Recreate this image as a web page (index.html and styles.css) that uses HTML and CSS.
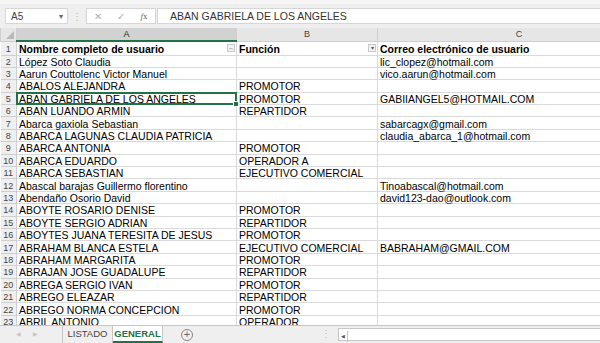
FILE: index.html
```html
<!DOCTYPE html>
<html lang="es">
<head>
<meta charset="UTF-8">
<title>GENERAL - Excel</title>
<link rel="stylesheet" href="styles.css">
</head>
<body>
<div class="formula-bar">
  <div class="name-box">A5<span class="caret">&#9662;</span></div>
  <div class="grip">&#8942;</div>
  <div class="fx-box">
    <span class="fx-btn">&#10005;</span>
    <span class="fx-btn">&#10003;</span>
    <span class="fx-btn fx"><i>f</i>x</span>
  </div>
  <div class="formula">ABAN GABRIELA DE LOS ANGELES</div>
</div>

<div class="grid-wrap">
<table class="sheet">
  <colgroup>
    <col class="c-head"><col class="c-a"><col class="c-b"><col class="c-c">
  </colgroup>
  <thead>
    <tr class="col-heads">
      <th class="corner"><span class="tri"></span></th>
      <th class="sel">A</th>
      <th>B</th>
      <th>C</th>
    </tr>
  </thead>
  <tbody>
    <tr class="r1"><th>1</th><td class="hd">Nombre completo de usuario<span class="filter sort">&#8596;</span></td><td class="hd">Función<span class="filter">&#9662;</span></td><td class="hd">Correo electrónico de usuario</td></tr>
    <tr><th>2</th><td>López Soto Claudia</td><td></td><td>lic_clopez@hotmail.com</td></tr>
    <tr><th>3</th><td>Aarun Couttolenc Victor Manuel</td><td></td><td>vico.aarun@hotmail.com</td></tr>
    <tr><th>4</th><td>ABALOS ALEJANDRA</td><td>PROMOTOR</td><td></td></tr>
    <tr class="cur"><th>5</th><td class="active">ABAN GABRIELA DE LOS ANGELES</td><td>PROMOTOR</td><td>GABIIANGEL5@HOTMAIL.COM</td></tr>
    <tr><th>6</th><td>ABAN LUANDO ARMIN</td><td>REPARTIDOR</td><td></td></tr>
    <tr><th>7</th><td>Abarca gaxiola Sebastian</td><td></td><td>sabarcagx@gmail.com</td></tr>
    <tr><th>8</th><td>ABARCA LAGUNAS CLAUDIA PATRICIA</td><td></td><td>claudia_abarca_1@hotmail.com</td></tr>
    <tr><th>9</th><td>ABARCA ANTONIA</td><td>PROMOTOR</td><td></td></tr>
    <tr><th>10</th><td>ABARCA EDUARDO</td><td>OPERADOR A</td><td></td></tr>
    <tr><th>11</th><td>ABARCA SEBASTIAN</td><td>EJECUTIVO COMERCIAL</td><td></td></tr>
    <tr><th>12</th><td>Abascal barajas Guillermo florentino</td><td></td><td>Tinoabascal@hotmail.com</td></tr>
    <tr><th>13</th><td>Abendaño Osorio David</td><td></td><td>david123-dao@outlook.com</td></tr>
    <tr><th>14</th><td>ABOYTE ROSARIO DENISE</td><td>PROMOTOR</td><td></td></tr>
    <tr><th>15</th><td>ABOYTE SERGIO ADRIAN</td><td>REPARTIDOR</td><td></td></tr>
    <tr><th>16</th><td>ABOYTES JUANA TERESITA DE JESUS</td><td>PROMOTOR</td><td></td></tr>
    <tr><th>17</th><td>ABRAHAM BLANCA ESTELA</td><td>EJECUTIVO COMERCIAL</td><td>BABRAHAM@GMAIL.COM</td></tr>
    <tr><th>18</th><td>ABRAHAM MARGARITA</td><td>PROMOTOR</td><td></td></tr>
    <tr><th>19</th><td>ABRAJAN JOSE GUADALUPE</td><td>REPARTIDOR</td><td></td></tr>
    <tr><th>20</th><td>ABREGA SERGIO IVAN</td><td>PROMOTOR</td><td></td></tr>
    <tr><th>21</th><td>ABREGO ELEAZAR</td><td>REPARTIDOR</td><td></td></tr>
    <tr><th>22</th><td>ABREGO NORMA CONCEPCION</td><td>PROMOTOR</td><td></td></tr>
    <tr><th>23</th><td>ABRIL ANTONIO</td><td>OPERADOR</td><td></td></tr>
    <tr><th>24</th><td></td><td></td><td></td></tr>
  </tbody>
</table>
</div>

<div class="tab-bar">
  <span class="nav">&#9664;</span>
  <span class="nav next">&#9654;</span>
  <div class="tabs">
    <span class="tab">LISTADO</span>
    <span class="tab on">GENERAL</span>
  </div>
  <span class="add">+</span>
  <span class="tab-grip">&#8942;</span>
  <div class="hscroll"><span class="hs-arrow">&#9664;</span></div>
</div>
</body>
</html>
```

FILE: styles.css
```css
body {
margin: 0;
width: 600px;
height: 343px;
overflow: hidden;
background: #fff;
font-family: "Liberation Sans", Arial, sans-serif;
color: #000;
display: flex;
flex-direction: column;
}
.formula-bar {
height: 28px;
flex: none;
background: #efefef;
border-top: 4px solid #f6f6f6;
box-sizing: border-box;
display: flex;
align-items: center;
padding: 0 0 0 5px;
font-size: 10px;
}
.name-box {
width: 63px;
height: 16px;
box-sizing: border-box;
background: #fff;
border: 1px solid #d6d6d6;
display: flex;
align-items: center;
justify-content: space-between;
padding: 0 4px 0 5px;
color: #444;
}
.caret {
font-size: 8px;
color: #666;
}
.grip {
width: 18px;
text-align: center;
color: #b5b5b5;
font-size: 10px;
}
.fx-box {
width: 70px;
height: 16px;
box-sizing: border-box;
background: #fff;
border: 1px solid #d6d6d6;
display: flex;
align-items: center;
justify-content: space-around;
color: #b0b0b0;
font-size: 10px;
margin-right: 1px;
}
.fx {
color: #666;
font-family: "Liberation Serif", serif;
font-size: 9px;
}
.formula {
flex: 1;
height: 16px;
box-sizing: border-box;
background: #fff;
border: 1px solid #d6d6d6;
border-right: none;
padding-left: 12px;
line-height: 14px;
font-size: 10.5px;
color: #333;
}
.grid-wrap {
flex: 1;
overflow: hidden;
}
.sheet {
border-collapse: collapse;
table-layout: fixed;
width: 660px;
font-size: 10.5px;
}
.c-head { width: 16px; }
.c-a { width: 220px; }
.c-b { width: 141px; }
.c-c { width: 283px; }
.sheet tbody tr {
height: 12.4px;
}
.sheet td {
padding: 1px 0 0 2px;
line-height: 10px;
border: 1px solid #dadada;
white-space: nowrap;
overflow: visible;
}
.sheet tbody th {
font-weight: normal;
font-size: 9px;
line-height: 10px;
color: #444;
background: #efefef;
border: 1px solid #cfcfcf;
border-left: none;
text-align: center;
padding: 1px 0 0;
}
.col-heads th {
height: 12px;
background: #e6e6e6;
border: 1px solid #cfcfcf;
border-top: none;
font-weight: normal;
font-size: 9px;
color: #444;
padding: 0;
}
.col-heads th.sel {
background: #d2d2d2;
border-bottom: 2px solid #217346;
color: #262626;
}
.corner {
position: relative;
}
.tri {
position: absolute;
right: 2px;
bottom: 2px;
border-left: 8px solid transparent;
border-bottom: 8px solid #b9b9b9;
}
.sheet tbody tr.r1 {
height: 14px;
}
.hd {
font-weight: bold;
position: relative;
}
.filter {
position: absolute;
right: 1px;
top: 2px;
width: 8px;
height: 8px;
box-sizing: border-box;
border: 1px solid #c8c8c8;
background: #f4f4f4;
font-size: 6px;
line-height: 6px;
text-align: center;
color: #555;
font-weight: normal;
}
.cur th {
background: #d2d2d2;
color: #217346;
}
.active {
position: relative;
}
.active::after {
content: "";
position: absolute;
left: -1px;
top: -1px;
right: -1px;
bottom: -1px;
border: 2px solid #217346;
}
.active::before {
content: "";
position: absolute;
right: -3px;
bottom: -3px;
width: 4px;
height: 4px;
background: #217346;
border: 1px solid #fff;
z-index: 1;
}
.tab-bar {
height: 17px;
flex: none;
background: #efefef;
border-top: 1px solid #c6c6c6;
display: flex;
align-items: stretch;
font-size: 9.5px;
color: #444;
}
.nav {
width: 17px;
text-align: center;
color: #c6c6c6;
font-size: 6px;
line-height: 16px;
margin-left: 10px;
}
.nav.next {
margin-left: 0;
}
.tabs {
display: flex;
margin-left: 18px;
border-left: 1px solid #c6c6c6;
}
.tab {
width: 49px;
text-align: center;
line-height: 16px;
border-right: 1px solid #c6c6c6;
}
.tab.on {
background: #fff;
color: #217346;
font-weight: bold;
border-bottom: 2px solid #217346;
line-height: 15px;
}
.add {
width: 12px;
height: 12px;
box-sizing: border-box;
border: 1px solid #888;
border-radius: 50%;
font-size: 11px;
line-height: 9px;
text-align: center;
color: #666;
align-self: center;
margin-left: 18px;
}
.tab-grip {
margin-left: 128px;
color: #bbb;
line-height: 16px;
}
.hscroll {
flex: 1;
margin: 2px 0 2px 7px;
background: #fff;
border: 1px solid #c6c6c6;
border-right: none;
}
.hs-arrow {
display: inline-block;
width: 8px;
height: 100%;
border-right: 1px solid #c6c6c6;
font-size: 5px;
text-align: center;
color: #555;
line-height: 10px;
}
```
